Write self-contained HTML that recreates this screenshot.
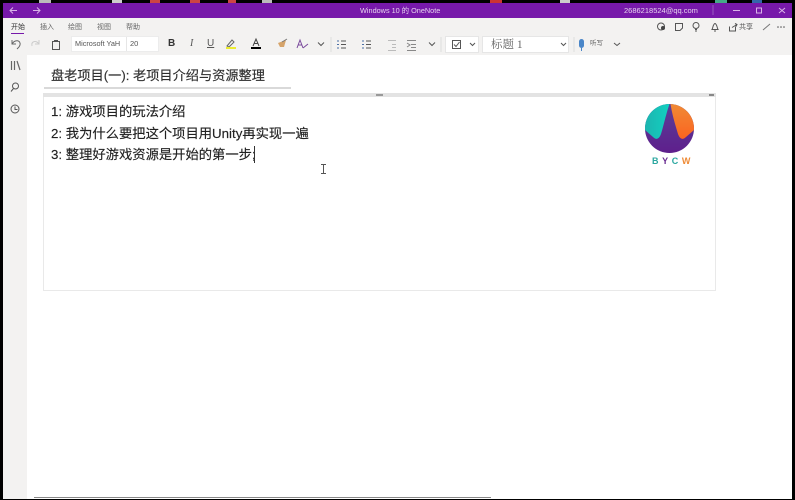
<!DOCTYPE html>
<html><head><meta charset="utf-8">
<style>
*{margin:0;padding:0;box-sizing:border-box}
html,body{width:795px;height:500px;overflow:hidden;background:#000}
body{position:relative;font-family:"Liberation Sans","Noto Sans CJK SC",sans-serif}
#w{position:absolute;left:0;top:0;width:795px;height:500px;filter:blur(.35px)}
.a{position:absolute}
.t{position:absolute;white-space:nowrap;line-height:1}
svg{position:absolute;overflow:visible}
.s{fill:none;stroke:#555;stroke-width:1}
.n{font-size:13.3px;line-height:18px;color:#222;-webkit-text-stroke:.15px #222}
</style></head><body><div id="w">
<div class="a" style="left:3px;top:3px;width:789px;height:496px;background:#fff"></div>
<div class="a" style="left:39px;top:0;width:12px;height:3px;background:#bbb"></div>
<div class="a" style="left:112px;top:0;width:10px;height:3px;background:#ccc"></div>
<div class="a" style="left:150px;top:0;width:10px;height:3px;background:#c44"></div>
<div class="a" style="left:190px;top:0;width:10px;height:3px;background:#c44"></div>
<div class="a" style="left:228px;top:0;width:8px;height:3px;background:#c44"></div>
<div class="a" style="left:262px;top:0;width:10px;height:3px;background:#bbb"></div>
<div class="a" style="left:490px;top:0;width:12px;height:3px;background:#c33"></div>
<div class="a" style="left:560px;top:0;width:10px;height:3px;background:#ccc"></div>
<div class="a" style="left:715px;top:0;width:12px;height:3px;background:#4a8"></div>
<div class="a" style="left:752px;top:0;width:10px;height:3px;background:#36a"></div>
<!-- title bar -->
<div class="a" style="left:3px;top:3px;width:789px;height:15px;background:#7719aa"></div>
<svg style="left:0;top:0" width="795" height="20"><path d="M17 10.500H10M13 7.500L10 10.500L13 13.500M33 10.500H40M37 7.500L40 10.500L37 13.500" fill="none" stroke="#d9b3e8" stroke-width="1"/><path d="M713 5V15" stroke="#9a5cc0" stroke-width="1"/><path d="M733 10.500H740" stroke="#d9b3e8" stroke-width="1"/><rect x="756.500" y="8" width="5" height="5" fill="none" stroke="#d9b3e8"/><path d="M779 8L785 13M785 8L779 13" stroke="#d9b3e8"/></svg>
<div class="t" style="left:360px;top:7px;font-size:7.300px;color:#e6d3ef">Windows 10 的 OneNote</div>
<div class="t" style="left:624px;top:7px;font-size:7.500px;color:#e6d3ef">2686218524@qq.com</div>
<!-- ribbon -->
<div class="a" style="left:3px;top:18px;width:789px;height:37px;background:#f3f2f1"></div>
<div class="t" style="left:11px;top:24px;font-size:7px;color:#333">开始</div>
<div class="a" style="left:11px;top:33px;width:13px;height:1px;background:#7719aa"></div>
<div class="t" style="left:40px;top:24px;font-size:7px;color:#666">插入</div>
<div class="t" style="left:68px;top:24px;font-size:7px;color:#666">绘图</div>
<div class="t" style="left:97px;top:24px;font-size:7px;color:#666">视图</div>
<div class="t" style="left:126px;top:24px;font-size:7px;color:#666">帮助</div>
<svg style="left:0;top:0" width="795" height="56">
<path class="s" d="M12 40L12 44L16 44M12 44C15 39 21 40 20 45C19.500 47 18 48 17 49" style="stroke:#666"/>
<path class="s" d="M39 40V44H35M39 44C36 40 31 41 32 46" style="stroke:#ccc"/>
<rect class="s" x="52.500" y="41.500" width="7" height="8"/><rect x="54" y="40" width="4" height="2" fill="#555"/>
<path d="M227 46L232 40L234 42L229 47Z" fill="none" stroke="#666"/><rect x="226" y="47" width="10" height="2" fill="#ecec30"/>
<path d="M253 46L256 39L259 46M254.500 43.500H257.500" fill="none" stroke="#444"/><rect x="251" y="47" width="10" height="2" fill="#000"/>
<path d="M278 43L286 40L284 47L280 47Z" fill="#d6a46a"/><path d="M282 42L287 39" stroke="#777"/>
<path d="M297 48L300 40L303 48M298.500 45H302" fill="none" stroke="#7a4a9c"/><path d="M303 48L308 44" stroke="#7a4a9c"/>
<path class="s" d="M318 42.500L321 45.500L324 42.500"/>
<path d="M331 37V52" stroke="#ddd"/>
<path d="M337 41h2M337 44.500h2M337 48h2" stroke="#4a6fa5"/><path class="s" d="M341 41H346M341 44.500H346M341 48H346"/>
<path d="M362 41h2M362 44.500h2M362 48h2" stroke="#4a6fa5"/><path class="s" d="M366 41H371M366 44.500H371M366 48H371"/>
<path d="M388 40.500H396M392 44.500H396M392 47.500H396M388 50.500H396" stroke="#bbb" fill="none"/>
<path d="M407 40.500H416M411 44.500H416M411 47.500H416M407 50.500H416" stroke="#888" fill="none"/><path d="M407 43L410 45L407 47" fill="none" stroke="#888"/>
<path class="s" d="M429 42.500L432 45.500L435 42.500"/>
<path d="M441 37V52" stroke="#ddd"/>
<rect x="445.500" y="36.500" width="33" height="16" fill="#fff" stroke="#e6e6e6"/>
<rect class="s" x="452.500" y="40.500" width="8" height="8"/><path d="M454 44.500L456 46.500L459.500 42" fill="none" stroke="#555"/>
<path class="s" d="M470 43L472.500 45.500L475 43"/>
<rect x="482.500" y="36.500" width="86" height="16" fill="#fff" stroke="#e6e6e6"/>
<path class="s" d="M561 43L563.500 45.500L566 43"/>
<path d="M574 37V52" stroke="#ddd"/>
<rect x="579" y="39" width="5" height="9" rx="2.500" fill="#4a86c8"/><path d="M581.500 48V51" stroke="#4a86c8"/>
<path class="s" d="M614 43L617 45.500L620 43"/>
<circle class="s" cx="661" cy="26.500" r="3.500"/><circle cx="663" cy="28" r="2" fill="#444"/>
<path class="s" d="M675.500 23.500H682.500V28L680 30.500H675.500Z"/>
<circle class="s" cx="696" cy="25.500" r="3"/><path class="s" d="M695 29.500H697M695 31H697"/>
<path class="s" d="M712 29.500C713 28 713 24 715 23.500C717 24 717 28 718 29.500ZM714 31H716"/>
<path class="s" d="M729.500 26.500V31H735.500V26.500M732 27.500L737 24.500M735 23.500L737 24.500L736 26.500"/>
<path d="M763 30L770 24" stroke="#777"/><circle cx="778" cy="27" r=".8" fill="#555"/><circle cx="781" cy="27" r=".8" fill="#555"/><circle cx="784" cy="27" r=".8" fill="#555"/>
</svg>
<div class="t" style="left:739px;top:24px;font-size:7px;color:#555">共享</div>
<div class="t" style="left:168px;top:39px;font-size:10px;font-weight:bold;color:#333">B</div>
<div class="t" style="left:190px;top:39px;font-size:10px;font-style:italic;color:#555;font-family:'Liberation Serif',serif">I</div>
<div class="t" style="left:207px;top:39px;font-size:10px;color:#555;text-decoration:underline">U</div>
<div class="a" style="left:71px;top:36px;width:88px;height:16px;background:#fff;border:1px solid #ececec"></div>
<div class="a" style="left:126px;top:37px;width:1px;height:14px;background:#e6e6e6"></div>
<div class="t" style="left:75px;top:40px;font-size:7.300px;color:#555">Microsoft YaH</div>
<div class="t" style="left:130px;top:40px;font-size:7.500px;color:#555">20</div>
<div class="t" style="left:491px;top:40px;font-size:11.500px;color:#666;font-family:'Liberation Serif','Noto Serif CJK SC',serif">标题 1</div>
<div class="t" style="left:590px;top:41px;font-size:6.500px;color:#666">听写</div>
<!-- sidebar -->
<div class="a" style="left:3px;top:55px;width:24px;height:444px;background:#f3f2f1"></div>
<svg style="left:0;top:55px" width="30" height="70">
<path d="M11.500 6V15M14.500 6V15M17 6L20 15" fill="none" stroke="#666" stroke-width="1.200"/>
<circle class="s" cx="15.500" cy="31" r="3"/><path class="s" d="M13.500 33.500L11 36.500"/>
<circle class="s" cx="15" cy="54" r="4"/><path class="s" d="M15 51.500V54.500H17.500"/>
</svg>
<!-- page title -->
<div class="t n" style="left:51px;top:67px;font-size:13.200px;color:#333;line-height:18px">盘老项目(一): 老项目介绍与资源整理</div>
<div class="a" style="left:44px;top:87px;width:247px;height:2px;background:#d9d9d9"></div>
<!-- note container -->
<div class="a" style="left:43px;top:93px;width:673px;height:198px;border:1px solid #e9e9e9;background:#fff"></div>
<div class="a" style="left:43px;top:93px;width:673px;height:4px;background:#e3e3e3"></div>
<div class="a" style="left:376px;top:94px;width:7px;height:2px;background:#999"></div>
<div class="a" style="left:709px;top:94px;width:5px;height:2px;background:#888"></div>
<div class="t n" style="left:51px;top:103px">1: 游戏项目的玩法介绍</div>
<div class="t n" style="left:51px;top:125px">2: 我为什么要把这个项目用Unity再实现一遍</div>
<div class="t n" style="left:51px;top:146px">3: 整理好游戏资源是开始的第一步;</div>
<div class="a" style="left:254px;top:146px;width:1px;height:17px;background:#333"></div>
<svg style="left:320px;top:164px" width="7" height="10"><path d="M1 .500H6M1 9.500H6M3.500 .500V9.500" fill="none" stroke="#555"/></svg>
<!-- logo -->
<svg style="left:645px;top:104px" width="49" height="49" viewBox="0 0 49 49">
<defs>
<clipPath id="c"><circle cx="24.500" cy="24.500" r="24.500"/></clipPath>
<linearGradient id="g1" x1="0" y1="0" x2="1" y2="0"><stop offset="0" stop-color="#1cb5b0"/><stop offset="1" stop-color="#12d0c0"/></linearGradient>
<linearGradient id="g2" x1="0" y1="0" x2="0" y2="1"><stop offset="0" stop-color="#f08a35"/><stop offset="1" stop-color="#fb6420"/></linearGradient>
<linearGradient id="g3" x1="0" y1="0" x2="0" y2="1"><stop offset="0" stop-color="#5a3f98"/><stop offset="1" stop-color="#5e1f8c"/></linearGradient>
</defs>
<g clip-path="url(#c)">
<rect width="49" height="49" fill="url(#g3)"/>
<path d="M0 0H24.500C21 10 19 20 16 30C14 35.500 11 36 8 33L0 26Z" fill="url(#g1)"/>
<path d="M49 0H25.500C27 10 30 20 33 30C35 35.500 38 36 41 33L49 26Z" fill="url(#g2)"/>
</g></svg>
<div class="t" style="left:652px;top:157px;font-size:9px;font-weight:bold;letter-spacing:3.600px"><span style="color:#2ba7a0">B</span><span style="color:#6a2c91">Y</span><span style="color:#2ba7a0">C</span><span style="color:#ee8a35">W</span></div>
<!-- scrollbar -->
<div class="a" style="left:34px;top:497px;width:457px;height:1px;background:#888"></div>
</div></body></html>
